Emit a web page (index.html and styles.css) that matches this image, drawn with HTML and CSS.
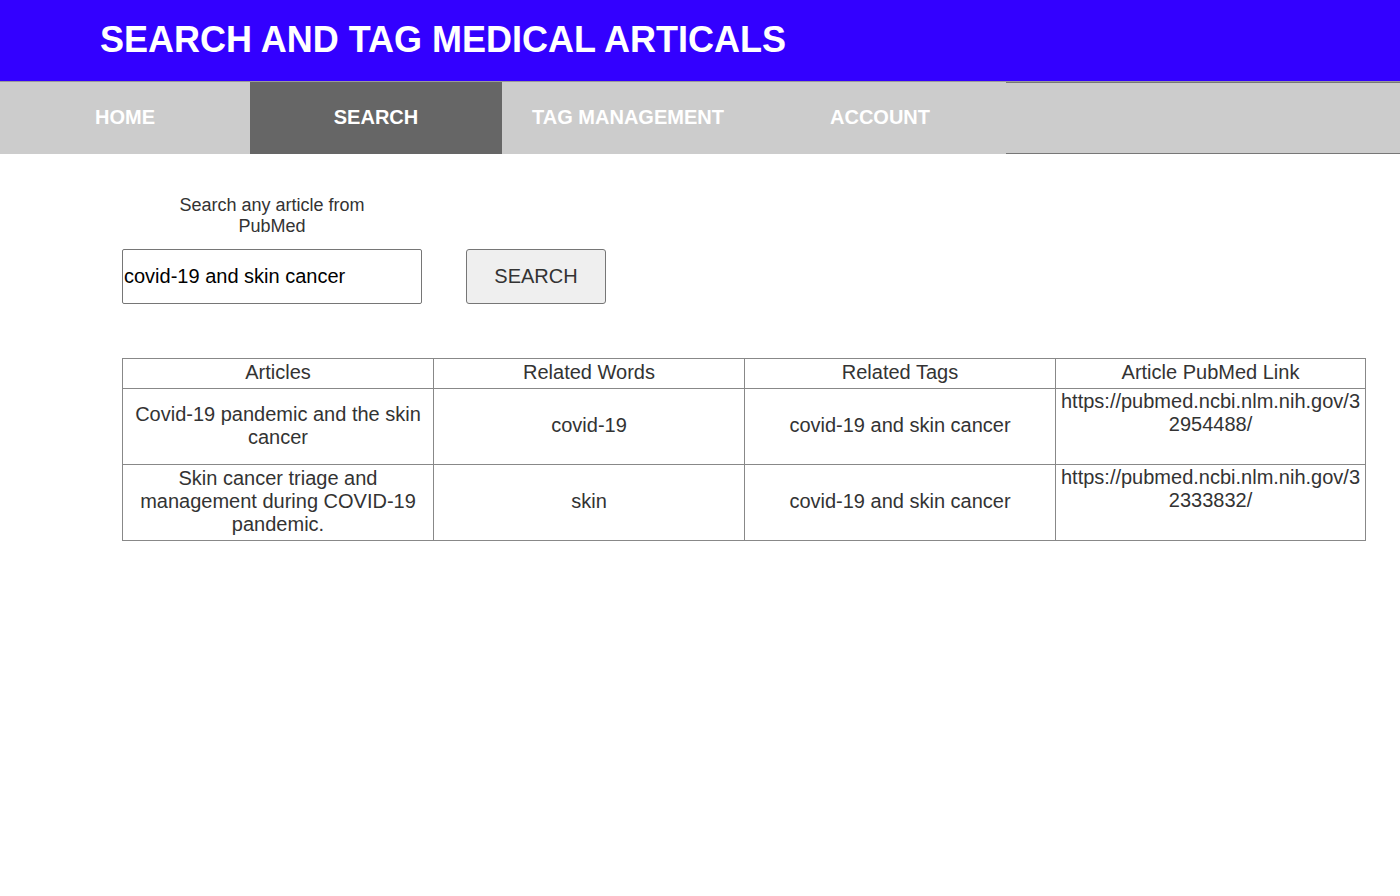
FILE: index.html
```html
<!DOCTYPE html>
<html lang="en">
<head>
<meta charset="utf-8">
<title>Search and Tag Medical Articals</title>
<link rel="stylesheet" href="styles.css">
</head>
<body>
<header class="topbar">
  <h1 class="title">SEARCH AND TAG MEDICAL ARTICALS</h1>
</header>
<nav class="menu">
  <a class="menu-item first" href="#">HOME</a>
  <a class="menu-item active" href="#">SEARCH</a>
  <a class="menu-item" href="#">TAG MANAGEMENT</a>
  <a class="menu-item" href="#">ACCOUNT</a>
  <span class="menu-fill"></span>
</nav>
<main class="content">
  <div class="search-row">
    <div class="search-field">
      <label class="search-label" for="q">Search any article from PubMed</label>
      <input id="q" class="search-input" type="text" value="covid-19 and skin cancer">
    </div>
    <button class="search-btn" type="button">SEARCH</button>
  </div>
  <table class="results">
    <colgroup>
      <col class="col">
      <col class="col">
      <col class="col">
      <col class="col last">
    </colgroup>
    <thead>
      <tr>
        <th>Articles</th>
        <th>Related Words</th>
        <th>Related Tags</th>
        <th>Article PubMed Link</th>
      </tr>
    </thead>
    <tbody>
      <tr>
        <td>Covid-19 pandemic and the skin cancer</td>
        <td>covid-19</td>
        <td>covid-19 and skin cancer</td>
        <td class="link">https://pubmed.ncbi.nlm.nih.gov/32954488/</td>
      </tr>
      <tr>
        <td>Skin cancer triage and management during COVID-19 pandemic.</td>
        <td>skin</td>
        <td>covid-19 and skin cancer</td>
        <td class="link">https://pubmed.ncbi.nlm.nih.gov/32333832/</td>
      </tr>
    </tbody>
  </table>
</main>
</body>
</html>
```

FILE: styles.css
```css
html, body {
  margin: 0;
  padding: 0;
  background: #ffffff;
  font-family: "Liberation Sans", Arial, sans-serif;
  color: #333333;
}

.topbar {
  height: 81px;
  background: #3300ff;
  border-bottom: 1px solid #9a9a9a;
  display: flex;
  align-items: center;
}

.title {
  margin: 0 0 2px 0;
  padding-left: 100px;
  font-size: 36px;
  font-weight: bold;
  color: #ffffff;
  line-height: normal;
}

.menu {
  display: flex;
  height: 72px;
  background: #cccccc;
}

.menu-item {
  width: 252px;
  display: flex;
  align-items: center;
  justify-content: center;
  padding-bottom: 2px;
  box-sizing: border-box;
  color: #ffffff;
  font-size: 20px;
  font-weight: bold;
  text-decoration: none;
}

.menu-item.first {
  width: 250px;
}

.menu-item.active {
  background: #666666;
}

.menu-fill {
  flex: 1;
  border-top: 1px solid #777777;
  border-bottom: 1px solid #777777;
  box-sizing: border-box;
}

.content {
  padding: 41px 0 0 122px;
}

.search-row {
  display: flex;
  align-items: flex-end;
  gap: 44px;
}

.search-field {
  width: 300px;
  display: flex;
  flex-direction: column;
  align-items: center;
}

.search-label {
  width: 200px;
  text-align: center;
  font-size: 18px;
  line-height: 21px;
  color: #333333;
  margin-bottom: 12px;
}

.search-input {
  box-sizing: border-box;
  width: 300px;
  height: 55px;
  margin: 0;
  padding: 0 1px;
  border: 1px solid #767676;
  border-radius: 2px;
  font-family: "Liberation Sans", Arial, sans-serif;
  font-size: 20px;
  color: #000000;
  background: #ffffff;
}

.search-btn {
  box-sizing: border-box;
  width: 140px;
  height: 55px;
  margin: 0;
  border: 1px solid #767676;
  border-radius: 3px;
  background: #efefef;
  font-family: "Liberation Sans", Arial, sans-serif;
  font-size: 20px;
  color: #333333;
}

.results {
  margin-top: 54px;
  table-layout: fixed;
  border-collapse: collapse;
  font-size: 20px;
  line-height: 23px;
  color: #333333;
}

.results .col {
  width: 311px;
}

.results .col.last {
  width: 310px;
}

.results th,
.results td {
  border: 1px solid #888888;
  text-align: center;
}

.results th {
  font-weight: normal;
  padding: 2px 1px 4px;
}

.results td {
  padding: 0 1px 2px;
  height: 72px;
  vertical-align: middle;
}

.results td.link {
  vertical-align: top;
  padding-top: 1px;
  word-break: break-all;
}
```
